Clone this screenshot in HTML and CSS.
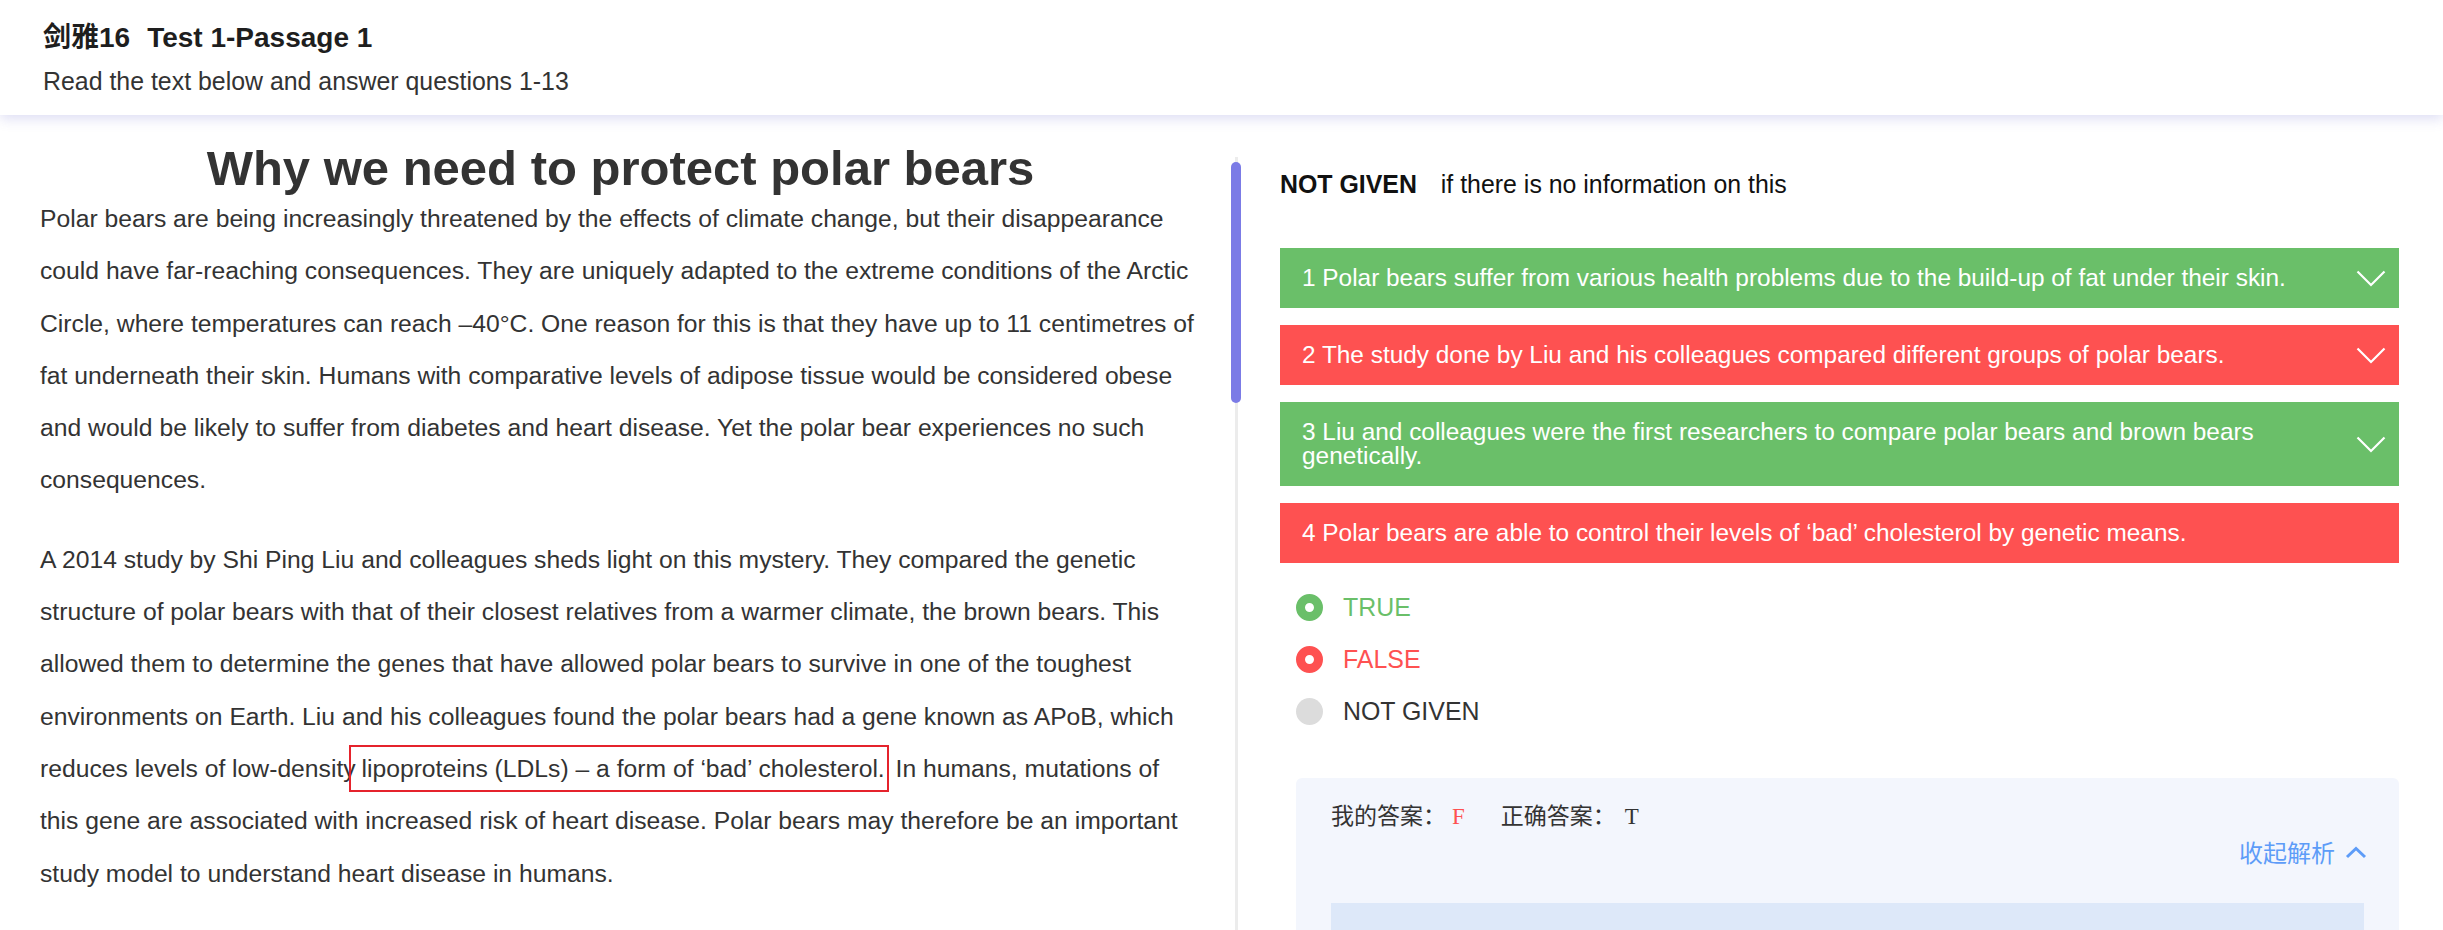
FILE: index.html
```html
<!DOCTYPE html>
<html lang="zh-CN">
<head>
<meta charset="utf-8">
<title>剑雅16 Test 1-Passage 1</title>
<link rel="stylesheet" href="styles.css">
</head>
<body>
<header class="top">
  <h1 class="top-title">剑雅16<span class="top-gap">Test 1-Passage 1</span></h1>
  <p class="top-sub">Read the text below and answer questions 1-13</p>
</header>
<main class="split">
  <section class="passage">
    <h2 class="passage-title">Why we need to protect polar bears</h2>
    <p>Polar bears are being increasingly threatened by the effects of climate change, but their disappearance could have far-reaching consequences. They are uniquely adapted to the extreme conditions of the Arctic Circle, where temperatures can reach –40°C. One reason for this is that they have up to 11 centimetres of fat underneath their skin. Humans with comparative levels of adipose tissue would be considered obese and would be likely to suffer from diabetes and heart disease. Yet the polar bear experiences no such consequences.</p>
    <p>A 2014 study by Shi Ping Liu and colleagues sheds light on this mystery. They compared the genetic structure of polar bears with that of their closest relatives from a warmer climate, the brown bears. This allowed them to determine the genes that have allowed polar bears to survive in one of the toughest environments on Earth. Liu and his colleagues found the polar bears had a gene known as APoB, which reduces levels of low-density <span class="mark">lipoproteins (LDLs) – a form of ‘bad’ cholesterol.</span> In humans, mutations of this gene are associated with increased risk of heart disease. Polar bears may therefore be an important study model to understand heart disease in humans.</p>
  </section>
  <div class="scroll">
    <div class="track"></div>
    <div class="thumb"></div>
  </div>
  <section class="questions">
    <p class="legend"><b>NOT GIVEN</b> if there is no information on this</p>
    <div class="q green">
      <span class="q-text">1 Polar bears suffer from various health problems due to the build-up of fat under their skin.</span>
      <svg class="chev" viewBox="0 0 30 17" width="30" height="17"><polyline points="1.5,1.5 15,15 28.5,1.5" fill="none" stroke="#fff" stroke-width="2.2"/></svg>
    </div>
    <div class="q red">
      <span class="q-text">2 The study done by Liu and his colleagues compared different groups of polar bears.</span>
      <svg class="chev" viewBox="0 0 30 17" width="30" height="17"><polyline points="1.5,1.5 15,15 28.5,1.5" fill="none" stroke="#fff" stroke-width="2.2"/></svg>
    </div>
    <div class="q green">
      <span class="q-text">3 Liu and colleagues were the first researchers to compare polar bears and brown bears genetically.</span>
      <svg class="chev" viewBox="0 0 30 17" width="30" height="17"><polyline points="1.5,1.5 15,15 28.5,1.5" fill="none" stroke="#fff" stroke-width="2.2"/></svg>
    </div>
    <div class="q red">
      <span class="q-text">4 Polar bears are able to control their levels of ‘bad’ cholesterol by genetic means.</span>
    </div>
    <ul class="opts">
      <li class="opt opt-true"><span class="dot dot-true"></span>TRUE</li>
      <li class="opt opt-false"><span class="dot dot-false"></span>FALSE</li>
      <li class="opt opt-ng"><span class="dot dot-ng"></span>NOT GIVEN</li>
    </ul>
    <div class="analysis">
      <div class="ans">我的答案：<span class="mine">F</span>正确答案：<span class="right">T</span></div>
      <div class="toggle">收起解析<svg class="up" viewBox="0 0 22 13" width="22" height="13"><polyline points="2,11 11,2.5 20,11" fill="none" stroke="#5d9cf8" stroke-width="3"/></svg></div>
      <div class="inner"></div>
    </div>
  </section>
</main>
</body>
</html>
```
FILE: styles.css
```css
html, body {
  margin: 0;
  padding: 0;
}
body {
  font-family: "Liberation Sans", Arial, "Noto Sans CJK SC", sans-serif;
  color: #333;
  background: #fff;
  height: 930px;
  overflow: hidden;
}

/* header */
.top {
  position: relative;
  z-index: 2;
  height: 115px;
  box-sizing: border-box;
  padding: 20px 43px 0;
  background: #fff;
  box-shadow: 0 4px 12px rgba(90, 90, 200, 0.2);
}
.top-title {
  margin: 0;
  font-size: 28px;
  line-height: 36px;
  font-weight: bold;
  color: #1e1e1e;
}
.top-gap {
  margin-left: 17px;
}
.top-sub {
  margin: 7px 0 0;
  font-size: 24.9px;
  line-height: 36px;
  color: #333;
}

/* split layout */
.split {
  display: grid;
  grid-template-columns: 1231px 10px 1fr;
  height: 815px;
}

.passage {
  padding: 28px 30px 0 40px;
  overflow: hidden;
}
.passage-title {
  margin: 0;
  text-align: center;
  font-size: 49px;
  line-height: 50px;
  font-weight: bold;
  color: #333;
}
.passage p {
  margin: 0;
  font-size: 24.7px;
  line-height: 52.3px;
  color: #333;
}
.passage p + p {
  margin-top: 27px;
}
.mark {
  border: 2px solid #e5232c;
  padding: 8px 2px 8px 10px;
  margin-left: -13px;
  margin-right: 0;
}

/* scrollbar column */
.scroll {
  position: relative;
  padding-top: 42px;
  box-sizing: border-box;
  height: 100%;
}
.track {
  width: 3px;
  height: 100%;
  margin: 0 auto;
  background: #ececec;
}
.thumb {
  position: absolute;
  left: 0;
  top: 47px;
  width: 10px;
  height: 241px;
  border-radius: 5px;
  background: #7b7be6;
}

/* questions */
.questions {
  padding: 51px 44px 0 39px;
  overflow: hidden;
}
.legend {
  margin: 0;
  font-size: 24.9px;
  line-height: 36px;
  color: #111;
}
.legend b {
  margin-right: 17px;
}
.q {
  display: flex;
  align-items: center;
  padding: 18px 13px 18px 22px;
  margin-top: 17px;
  color: #fff;
  font-size: 24.4px;
  line-height: 24px;
}
.legend + .q {
  margin-top: 46px;
}
.q-text {
  flex: 1;
  min-width: 0;
}
.chev {
  flex: none;
  margin-left: 20px;
  display: block;
}
.green {
  background: #6abf69;
}
.red {
  background: #fe5151;
}

.opts {
  list-style: none;
  margin: 18px 0 0;
  padding: 0 0 0 16px;
}
.opt {
  display: flex;
  align-items: center;
  height: 52px;
  font-size: 24.9px;
}
.dot {
  width: 27px;
  height: 27px;
  border-radius: 50%;
  box-sizing: border-box;
  margin-right: 20px;
  flex: none;
}
.dot-true {
  border: 9px solid #6abf69;
  background: #fff;
}
.dot-false {
  border: 9px solid #fe5151;
  background: #fff;
}
.dot-ng {
  background: #dcdcdc;
}
.opt-true { color: #6abf69; }
.opt-false { color: #fe5151; }
.opt-ng { color: #333; }

/* analysis */
.analysis {
  margin: 41px 0 0 16px;
  padding: 23px 35px 0;
  background: #f3f6fd;
  border-radius: 6px;
  height: 220px;
}
.ans {
  font-family: "Liberation Serif", "Noto Sans CJK SC", serif;
  font-size: 23px;
  line-height: 32px;
  color: #333;
}
.mine {
  color: #fe5151;
  margin-left: 6px;
  margin-right: 36px;
}
.right {
  margin-left: 9px;
}
.toggle {
  margin-top: 3px;
  margin-right: -3px;
  display: flex;
  justify-content: flex-end;
  align-items: center;
  font-family: "Noto Sans CJK SC", sans-serif;
  font-size: 24px;
  line-height: 32px;
  color: #5d9cf8;
}
.up {
  margin-left: 10px;
  display: block;
}
.inner {
  margin-top: 35px;
  height: 120px;
  background: #dde8f9;
}
```
